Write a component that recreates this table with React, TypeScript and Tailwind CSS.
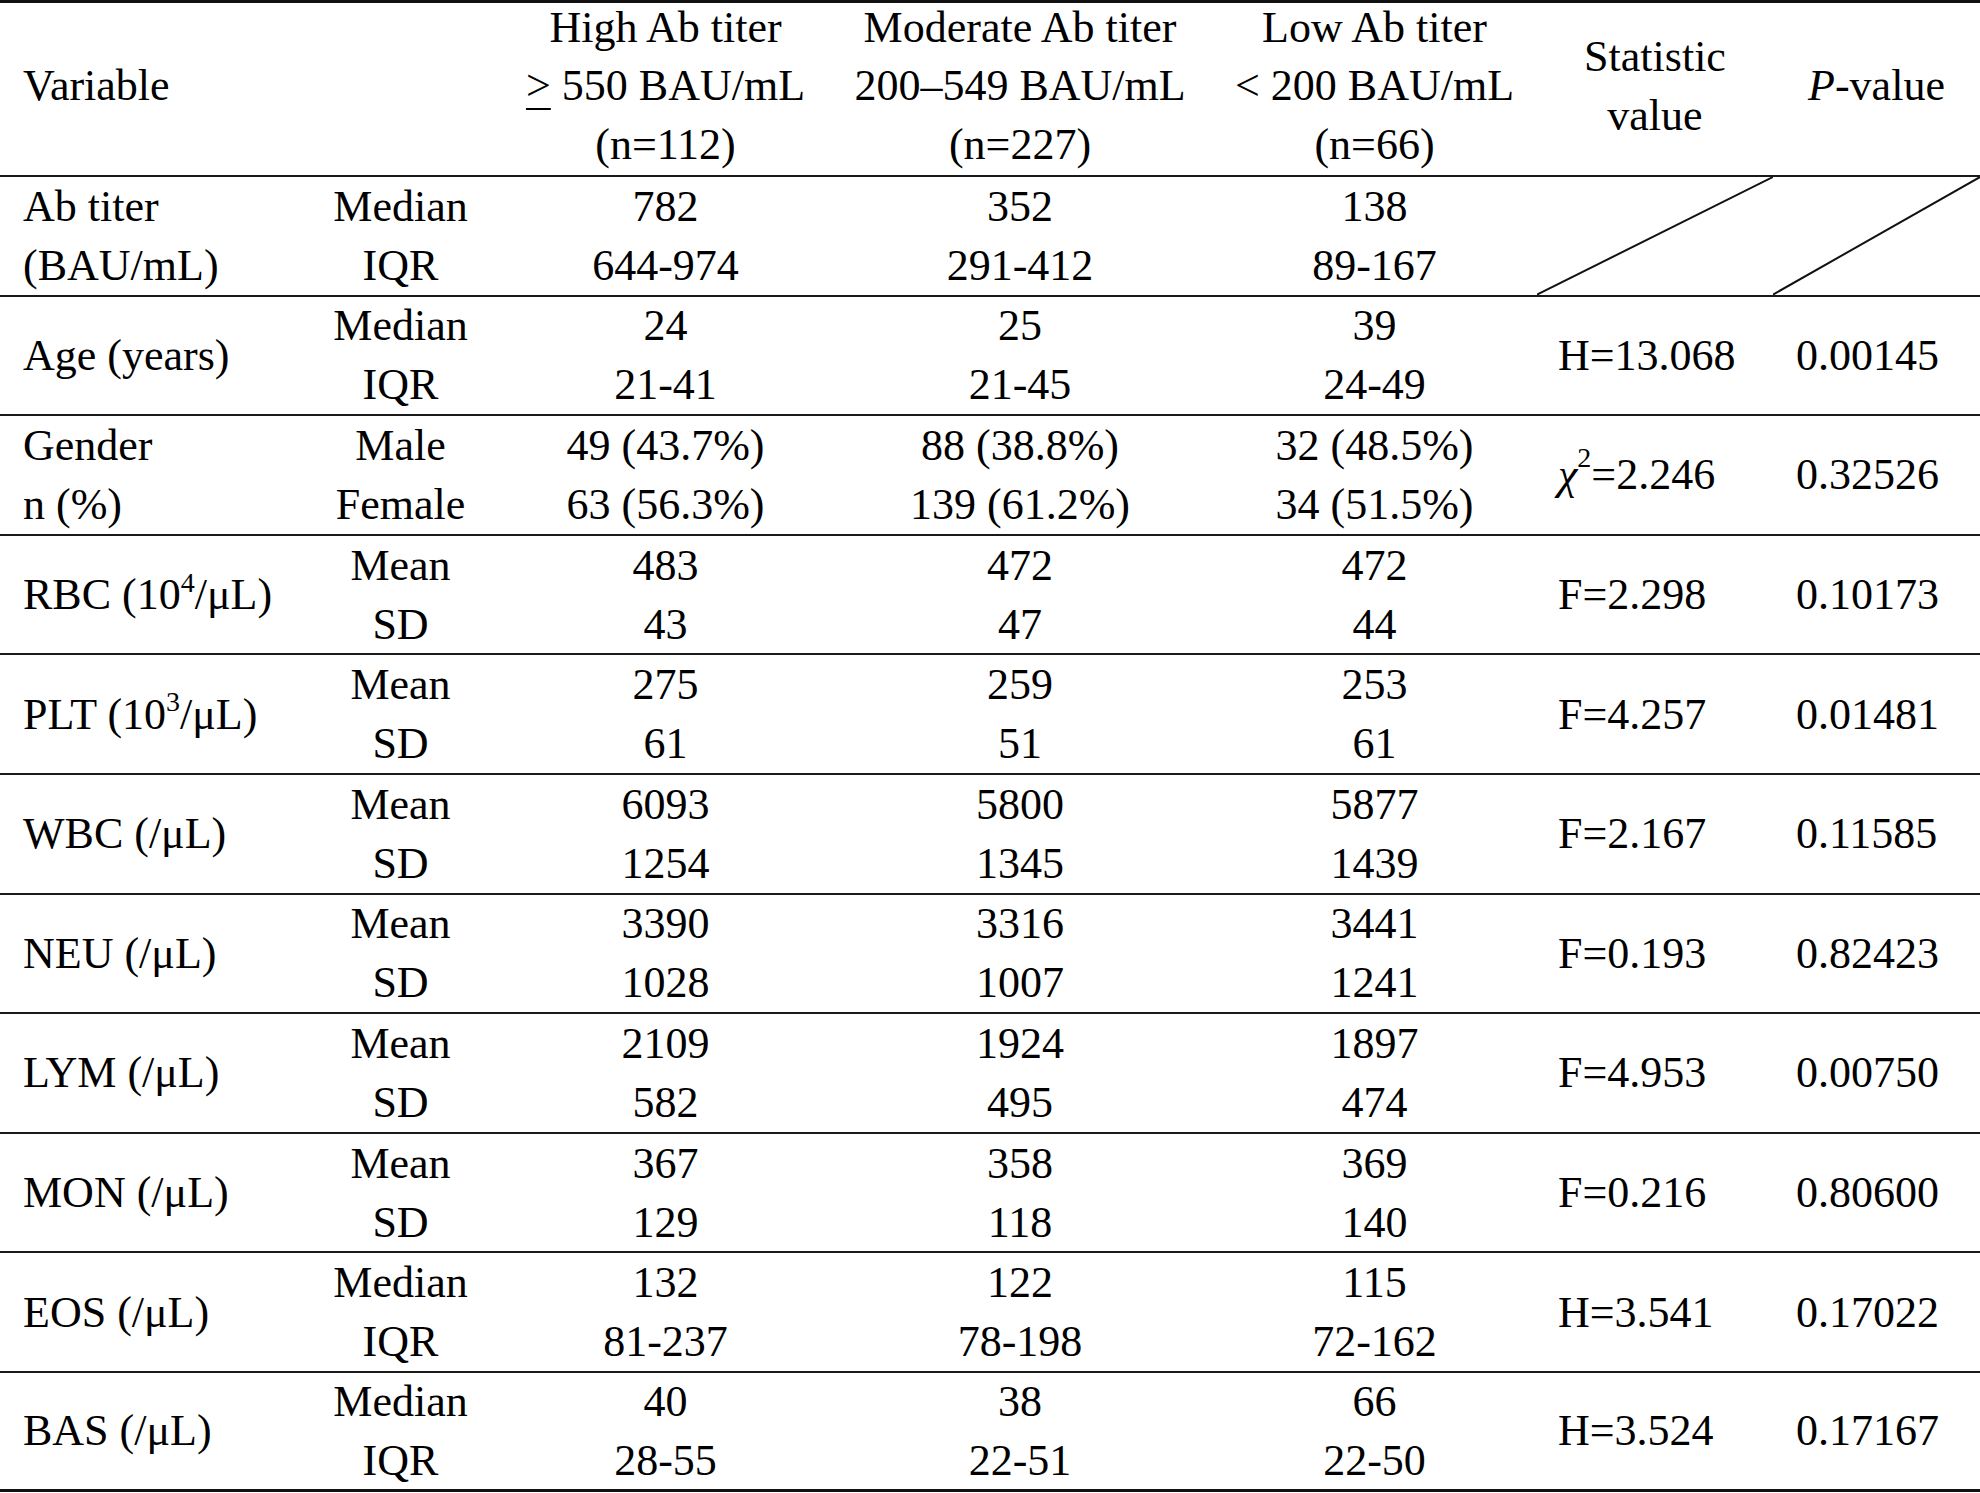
import React from "react";

type Row = {
  variable: React.ReactNode[];
  stat: string[];
  high: string[];
  mid: string[];
  low: string[];
  value?: React.ReactNode;
  p?: string;
};

const unit = (name: string, exp?: string) => (
  <>
    {name} (
    {exp ? (
      <>
        10<sup className="text-[28px] -top-[0.62em]">{exp}</sup>
      </>
    ) : null}
    /μL)
  </>
);

const rows: Row[] = [
  {
    variable: ["Ab titer", "(BAU/mL)"],
    stat: ["Median", "IQR"],
    high: ["782", "644-974"],
    mid: ["352", "291-412"],
    low: ["138", "89-167"],
  },
  {
    variable: ["Age (years)"],
    stat: ["Median", "IQR"],
    high: ["24", "21-41"],
    mid: ["25", "21-45"],
    low: ["39", "24-49"],
    value: "H=13.068",
    p: "0.00145",
  },
  {
    variable: ["Gender", "n (%)"],
    stat: ["Male", "Female"],
    high: ["49 (43.7%)", "63 (56.3%)"],
    mid: ["88 (38.8%)", "139 (61.2%)"],
    low: ["32 (48.5%)", "34 (51.5%)"],
    value: (
      <>
        <i>χ</i>
        <sup className="text-[28px] -top-[0.62em]">2</sup>=2.246
      </>
    ),
    p: "0.32526",
  },
  {
    variable: [unit("RBC", "4")],
    stat: ["Mean", "SD"],
    high: ["483", "43"],
    mid: ["472", "47"],
    low: ["472", "44"],
    value: "F=2.298",
    p: "0.10173",
  },
  {
    variable: [unit("PLT", "3")],
    stat: ["Mean", "SD"],
    high: ["275", "61"],
    mid: ["259", "51"],
    low: ["253", "61"],
    value: "F=4.257",
    p: "0.01481",
  },
  {
    variable: [unit("WBC")],
    stat: ["Mean", "SD"],
    high: ["6093", "1254"],
    mid: ["5800", "1345"],
    low: ["5877", "1439"],
    value: "F=2.167",
    p: "0.11585",
  },
  {
    variable: [unit("NEU")],
    stat: ["Mean", "SD"],
    high: ["3390", "1028"],
    mid: ["3316", "1007"],
    low: ["3441", "1241"],
    value: "F=0.193",
    p: "0.82423",
  },
  {
    variable: [unit("LYM")],
    stat: ["Mean", "SD"],
    high: ["2109", "582"],
    mid: ["1924", "495"],
    low: ["1897", "474"],
    value: "F=4.953",
    p: "0.00750",
  },
  {
    variable: [unit("MON")],
    stat: ["Mean", "SD"],
    high: ["367", "129"],
    mid: ["358", "118"],
    low: ["369", "140"],
    value: "F=0.216",
    p: "0.80600",
  },
  {
    variable: [unit("EOS")],
    stat: ["Median", "IQR"],
    high: ["132", "81-237"],
    mid: ["122", "78-198"],
    low: ["115", "72-162"],
    value: "H=3.541",
    p: "0.17022",
  },
  {
    variable: [unit("BAS")],
    stat: ["Median", "IQR"],
    high: ["40", "28-55"],
    mid: ["38", "22-51"],
    low: ["66", "22-50"],
    value: "H=3.524",
    p: "0.17167",
  },
];

const cols = "grid grid-cols-[298px_205px_325px_384px_325px_236px_207px] grid-rows-[minmax(0,1fr)]";

const Lines = ({ items }: { items: React.ReactNode[] }) => (
  <div className="flex min-h-0 flex-col items-center justify-center">
    {items.map((t, i) => (
      <div key={i}>{t}</div>
    ))}
  </div>
);

const Diagonal = () => (
  <svg className="h-full w-full" viewBox="0 0 100 100" preserveAspectRatio="none">
    <line x1="0" y1="100" x2="100" y2="0" stroke="#111" strokeWidth="2" vectorEffect="non-scaling-stroke" />
  </svg>
);

export default function App() {
  return (
    <div className="h-[1493px] w-[1980px] bg-white text-[44px] leading-[59px] text-black font-['Liberation_Serif','Times_New_Roman',serif]">
      <div className="border-t-[3px] border-[#111]">
        <div className={`${cols} h-[174px] border-b-2 border-[#1a1a1a] pb-[5px] leading-[58.5px]`}>
          <div className="flex items-center pl-[23px]">Variable</div>
          <div />
          <Lines
            items={[
              "High Ab titer",
              <>
                <span className="underline decoration-[2px] underline-offset-[8px]">&gt;</span> 550 BAU/mL
              </>,
              "(n=112)",
            ]}
          />
          <Lines items={["Moderate Ab titer", "200–549 BAU/mL", "(n=227)"]} />
          <Lines items={["Low Ab titer", "< 200 BAU/mL", "(n=66)"]} />
          <div className="flex flex-col items-center justify-center">
            <div>Statistic</div>
            <div>value</div>
          </div>
          <div className="flex items-center justify-center">
            <span>
              <i>P</i>-value
            </span>
          </div>
        </div>

        {rows.map((r, i) => {
          const last = i === rows.length - 1;
          return (
            <div
              key={i}
              className={`${cols} ${last ? "h-[119px] border-b-[3px] border-[#111]" : "h-[119.6px] border-b-2 border-[#1a1a1a]"}`}
            >
              <div className="flex flex-col justify-center pl-[23px]">
                {r.variable.map((t, j) => (
                  <div key={j}>{t}</div>
                ))}
              </div>
              <Lines items={r.stat} />
              <Lines items={r.high} />
              <Lines items={r.mid} />
              <Lines items={r.low} />
              {r.value === undefined ? (
                <>
                  <Diagonal />
                  <Diagonal />
                </>
              ) : (
                <>
                  <div className="flex items-center pl-[21px]">{r.value}</div>
                  <div className="flex items-center pl-[23px]">{r.p}</div>
                </>
              )}
            </div>
          );
        })}
      </div>
    </div>
  );
}
